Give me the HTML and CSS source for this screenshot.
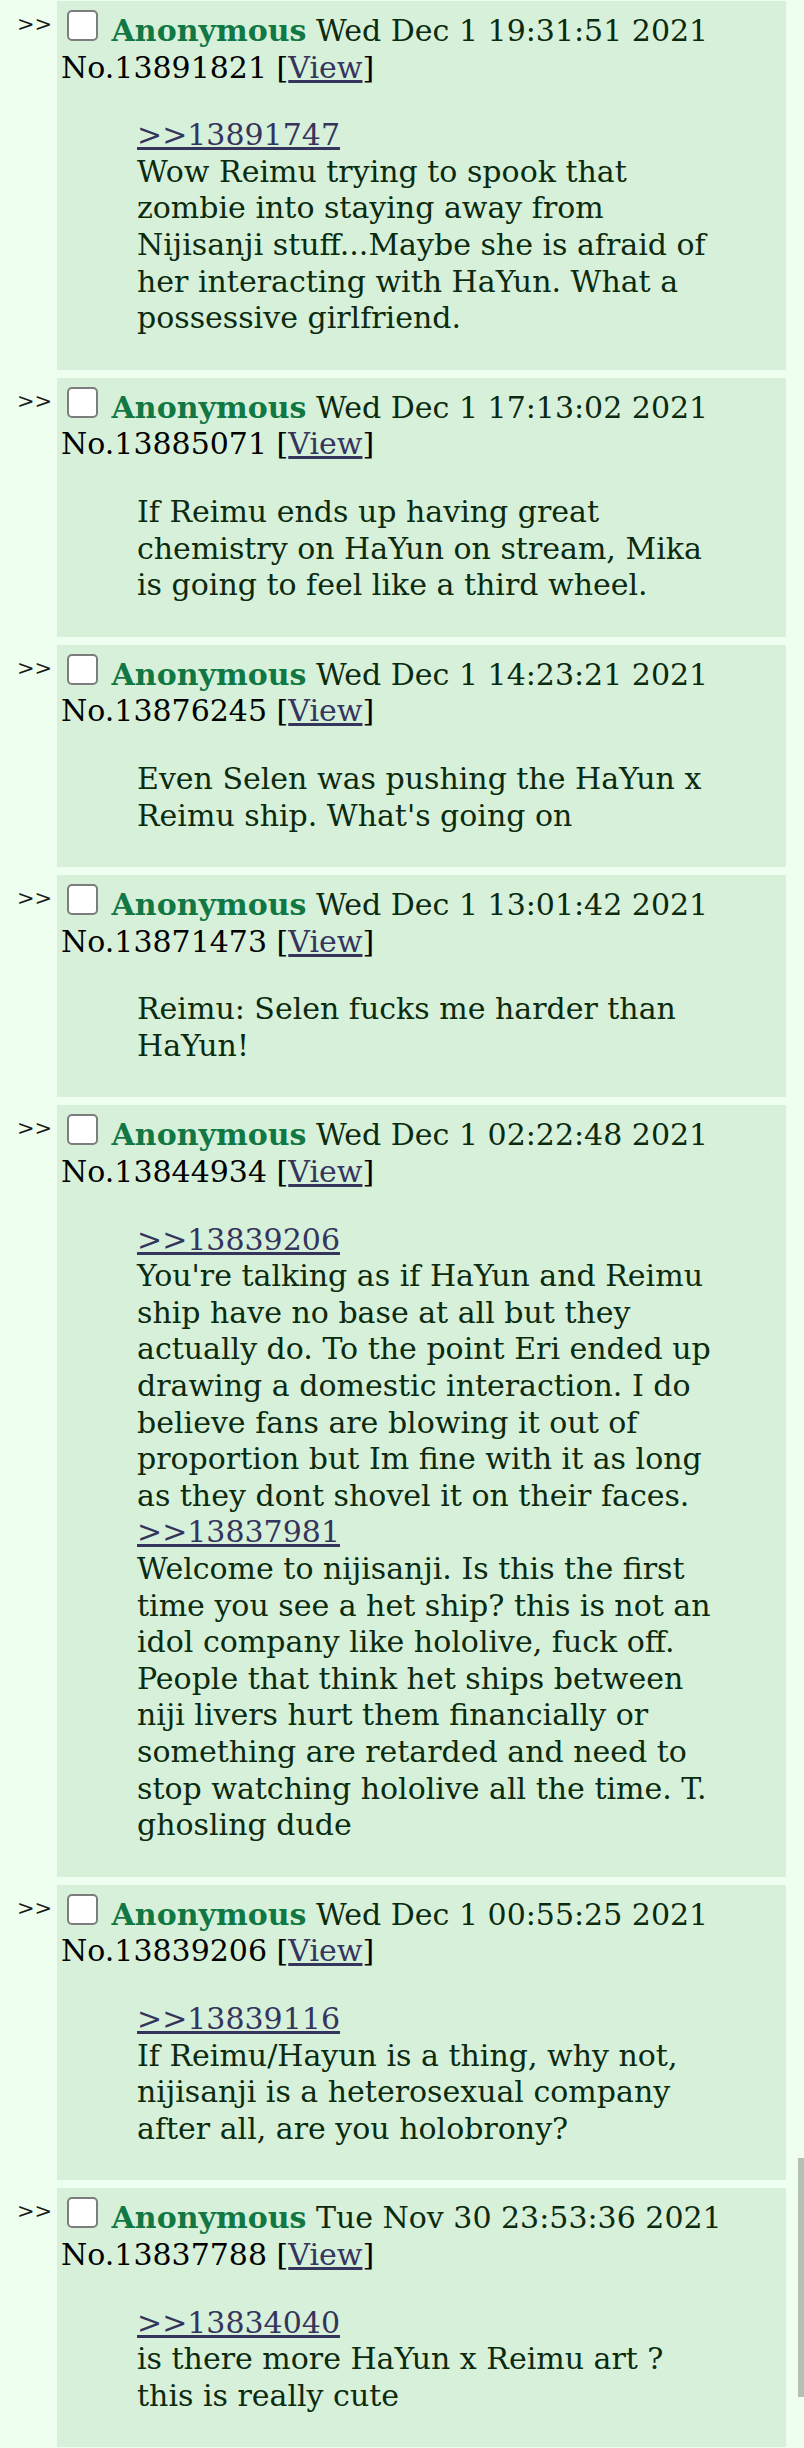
FILE: index.html
```html
<!DOCTYPE html>
<html lang="en">
<head>
    <meta charset="UTF-8">
    <meta name="viewport" content="width=device-width, initial-scale=1.0">
    <title>Thread replies</title>
    <link rel="stylesheet" href="styles.css">
</head>
<body>
    <div class="thread">

        <div class="post-row">
            <div class="side-arrows">&gt;&gt;</div>
            <div class="reply">
                <div class="post-info">
                    <input type="checkbox" class="post-check">
                    <span class="name">Anonymous</span> <span class="date">Wed Dec 1 19:31:51 2021</span>
                    <span class="post-num">No.13891821 [<a href="#">View</a>]</span>
                </div>
                <blockquote class="message">
                    <a href="#" class="quotelink">&gt;&gt;13891747</a><br>
                    Wow Reimu trying to spook that<br>
                    zombie into staying away from<br>
                    Nijisanji stuff...Maybe she is afraid of<br>
                    her interacting with HaYun. What a<br>
                    possessive girlfriend.
                </blockquote>
            </div>
        </div>

        <div class="post-row">
            <div class="side-arrows">&gt;&gt;</div>
            <div class="reply">
                <div class="post-info">
                    <input type="checkbox" class="post-check">
                    <span class="name">Anonymous</span> <span class="date">Wed Dec 1 17:13:02 2021</span>
                    <span class="post-num">No.13885071 [<a href="#">View</a>]</span>
                </div>
                <blockquote class="message">
                    If Reimu ends up having great<br>
                    chemistry on HaYun on stream, Mika<br>
                    is going to feel like a third wheel.
                </blockquote>
            </div>
        </div>

        <div class="post-row">
            <div class="side-arrows">&gt;&gt;</div>
            <div class="reply">
                <div class="post-info">
                    <input type="checkbox" class="post-check">
                    <span class="name">Anonymous</span> <span class="date">Wed Dec 1 14:23:21 2021</span>
                    <span class="post-num">No.13876245 [<a href="#">View</a>]</span>
                </div>
                <blockquote class="message">
                    Even Selen was pushing the HaYun x<br>
                    Reimu ship. What's going on
                </blockquote>
            </div>
        </div>

        <div class="post-row">
            <div class="side-arrows">&gt;&gt;</div>
            <div class="reply">
                <div class="post-info">
                    <input type="checkbox" class="post-check">
                    <span class="name">Anonymous</span> <span class="date">Wed Dec 1 13:01:42 2021</span>
                    <span class="post-num">No.13871473 [<a href="#">View</a>]</span>
                </div>
                <blockquote class="message">
                    Reimu: Selen fucks me harder than<br>
                    HaYun!
                </blockquote>
            </div>
        </div>

        <div class="post-row">
            <div class="side-arrows">&gt;&gt;</div>
            <div class="reply">
                <div class="post-info">
                    <input type="checkbox" class="post-check">
                    <span class="name">Anonymous</span> <span class="date">Wed Dec 1 02:22:48 2021</span>
                    <span class="post-num">No.13844934 [<a href="#">View</a>]</span>
                </div>
                <blockquote class="message">
                    <a href="#" class="quotelink">&gt;&gt;13839206</a><br>
                    You're talking as if HaYun and Reimu<br>
                    ship have no base at all but they<br>
                    actually do. To the point Eri ended up<br>
                    drawing a domestic interaction. I do<br>
                    believe fans are blowing it out of<br>
                    proportion but Im fine with it as long<br>
                    as they dont shovel it on their faces.<br>
                    <a href="#" class="quotelink">&gt;&gt;13837981</a><br>
                    Welcome to nijisanji. Is this the first<br>
                    time you see a het ship? this is not an<br>
                    idol company like hololive, fuck off.<br>
                    People that think het ships between<br>
                    niji livers hurt them financially or<br>
                    something are retarded and need to<br>
                    stop watching hololive all the time. T.<br>
                    ghosling dude
                </blockquote>
            </div>
        </div>

        <div class="post-row">
            <div class="side-arrows">&gt;&gt;</div>
            <div class="reply">
                <div class="post-info">
                    <input type="checkbox" class="post-check">
                    <span class="name">Anonymous</span> <span class="date">Wed Dec 1 00:55:25 2021</span>
                    <span class="post-num">No.13839206 [<a href="#">View</a>]</span>
                </div>
                <blockquote class="message">
                    <a href="#" class="quotelink">&gt;&gt;13839116</a><br>
                    If Reimu/Hayun is a thing, why not,<br>
                    nijisanji is a heterosexual company<br>
                    after all, are you holobrony?
                </blockquote>
            </div>
        </div>

        <div class="post-row">
            <div class="side-arrows">&gt;&gt;</div>
            <div class="reply">
                <div class="post-info">
                    <input type="checkbox" class="post-check">
                    <span class="name">Anonymous</span> <span class="date">Tue Nov 30 23:53:36 2021</span>
                    <span class="post-num">No.13837788 [<a href="#">View</a>]</span>
                </div>
                <blockquote class="message">
                    <a href="#" class="quotelink">&gt;&gt;13834040</a><br>
                    is there more HaYun x Reimu art ?<br>
                    this is really cute
                </blockquote>
            </div>
        </div>

    </div>

    <div class="scroll-thumb"></div>
</body>
</html>
```

FILE: styles.css
```css
body {
    margin: 0;
    background-color: #eefff0;
    font-family: "DejaVu Serif", "Liberation Serif", serif;
    font-size: 30px;
    line-height: 36.6px;
    color: #0b2a0e;
}

.thread {
    padding: 1px 18px 0 0;
}

.post-row {
    display: flex;
    align-items: flex-start;
    margin-bottom: 8px;
}

.side-arrows {
    width: 40px;
    flex-shrink: 0;
    padding: 12px 0 0 17px;
    font-size: 21px;
    line-height: 22px;
    color: #1a1a1a;
}

.reply {
    flex: 1;
    background-color: #d6f0da;
    padding: 9px 4px 4px 4px;
}

.post-check {
    appearance: none;
    -webkit-appearance: none;
    width: 31px;
    height: 31px;
    margin: 0 4px 0 6px;
    border: 2px solid #7d7d7d;
    border-radius: 5px;
    background-color: #ffffff;
    vertical-align: baseline;
    box-sizing: border-box;
}

.name {
    color: #117743;
    font-weight: bold;
}

.date {
    color: #0b2a0e;
}

.post-num {
    color: #000000;
}

.post-num a {
    color: #34345c;
}

.message {
    margin: 31px 0 29px 76px;
}

.quotelink {
    color: #34345c;
}

.scroll-thumb {
    position: absolute;
    top: 2158px;
    right: 0;
    width: 6px;
    height: 239px;
    background-color: #b4bfb6;
}
```
